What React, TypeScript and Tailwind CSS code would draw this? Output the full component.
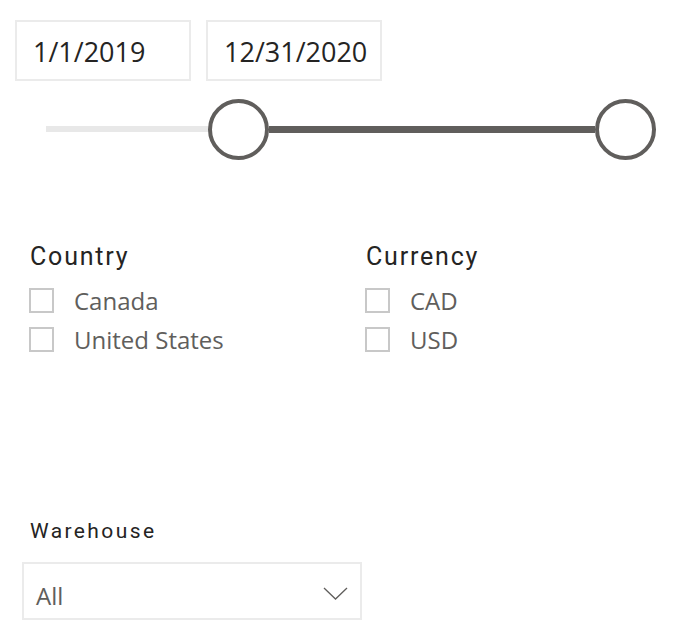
const dates = ["1/1/2019", "12/31/2020"];

const countries = ["Canada", "United States"];
const currencies = ["CAD", "USD"];

const CheckList = ({ title, items }: { title: string; items: string[] }) => (
  <div className="flex flex-col">
    <h3 className="text-[25px] leading-[30px] text-[#252423] tracking-[1.8px] font-['Roboto',sans-serif] pl-[1px]">
      {title}
    </h3>
    <ul className="mt-[16px] flex flex-col gap-[14px]">
      {items.map((item) => (
        <li key={item} className="flex items-center gap-[20px] h-[25px]">
          <span className="w-[25px] h-[25px] border-2 border-[#c8c8c8] bg-white shrink-0" />
          <span className="text-[24px] text-[#605e5c] font-['Open_Sans',sans-serif]">
            {item}
          </span>
        </li>
      ))}
    </ul>
  </div>
);

export default function App() {
  return (
    <div className="w-[682px] h-[636px] bg-white overflow-hidden font-['Open_Sans',sans-serif]">
      {/* Date inputs */}
      <div className="flex gap-[15px] pt-[20px] pl-[15px]">
        {dates.map((d) => (
          <div
            key={d}
            className="w-[176px] h-[61px] border-2 border-[#ebebeb] flex items-center pl-[16px] pt-[3px] text-[27px] text-[#252423]"
          >
            {d}
          </div>
        ))}
      </div>

      {/* Range slider */}
      <div className="flex items-center pl-[46px] mt-[17px] h-[62px]">
        <div className="w-[164px] h-[6px] bg-[#e8e8e8] -mr-[2px]" />
        <div className="w-[61px] h-[61px] rounded-full border-[4px] border-[#605e5c] bg-white shrink-0" />
        <div className="w-[326px] h-[7px] bg-[#605e5c]" />
        <div className="w-[61px] h-[61px] rounded-full border-[4px] border-[#605e5c] bg-white shrink-0" />
      </div>

      {/* Country / Currency */}
      <div className="flex mt-[82px] pl-[29px]">
        <div className="w-[336px]">
          <CheckList title="Country" items={countries} />
        </div>
        <CheckList title="Currency" items={currencies} />
      </div>

      {/* Warehouse */}
      <div className="mt-[166px] pl-[22px]">
        <h3 className="pl-[8px] text-[21px] leading-[26px] text-[#252423] tracking-[2.4px] font-['Roboto',sans-serif]">
          Warehouse
        </h3>
        <div className="mt-[18px] w-[340px] h-[58px] border-2 border-[#ebebeb] flex items-center justify-between pl-[12px] pr-[12px]">
          <span className="mt-[10px] text-[24px] text-[#605e5c]">All</span>
          <svg className="mt-[4px]" width="25" height="13" viewBox="0 0 25 13" fill="none">
            <path d="M1 1 L12.5 12 L24 1" stroke="#605e5c" strokeWidth="1.3" />
          </svg>
        </div>
      </div>
    </div>
  );
}
